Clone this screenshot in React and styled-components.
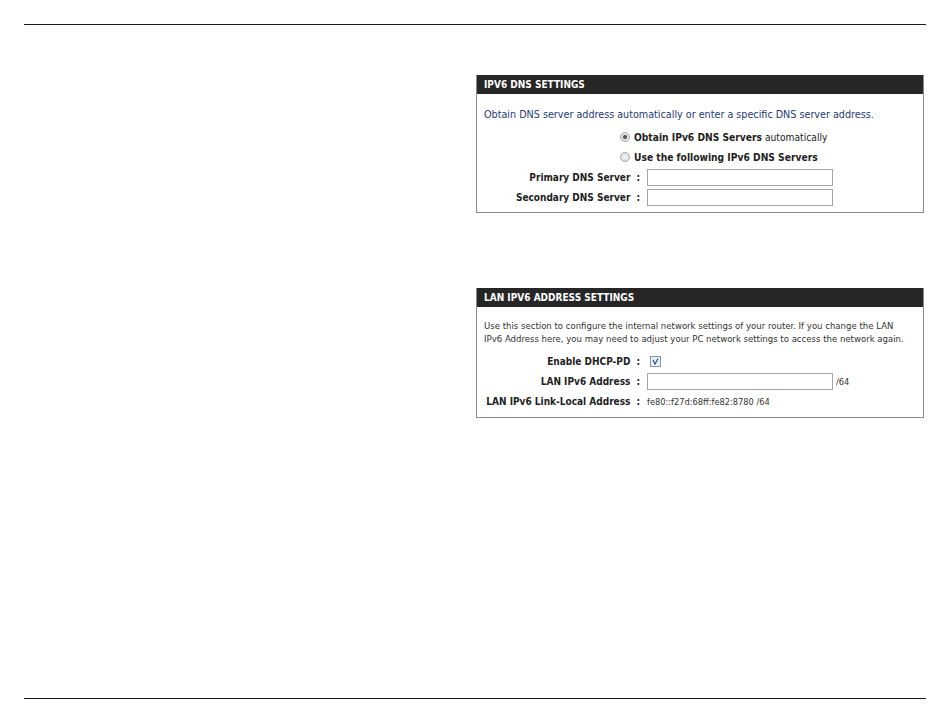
import * as React from 'react';
import styled, { createGlobalStyle } from 'styled-components';

const GlobalStyle = createGlobalStyle`
    html, body {
        margin: 0;
        padding: 0;
        background: #ffffff;
    }
    body {
        font-family: "DejaVu Sans Condensed", "DejaVu Sans", sans-serif;
        color: #222;
    }
`;

const Page = styled.div`
    width: 950px;
    height: 725px;
    display: flex;
    flex-direction: column;
    box-sizing: border-box;
    padding: 24px 24px 0 24px;
`;

const Rule = styled.div`
    height: 1px;
    background: #1a1a1a;
`;

const Body = styled.div`
    flex: 1;
    display: grid;
    grid-template-columns: 452px 448px;
    align-content: start;
`;

const Column = styled.div`
    display: flex;
    flex-direction: column;
    gap: 75px;
    padding-top: 50px;
`;

const Panel = styled.section`
    border: 1px solid #8a8a8a;
    border-top: none;
    background: #fff;
`;

const PanelHeader = styled.h2`
    margin: 0;
    height: 19px;
    line-height: 19px;
    padding-left: 7px;
    background: #262626;
    color: #fff;
    font-size: 10px;
    font-weight: bold;
`;

const PanelBody = styled.div`
    padding: ${p => p.$pad || '13px 7px 5px 7px'};
`;

const Intro = styled.p`
    margin: 0 0 ${p => p.$gap || '6px'} 0;
    font-size: ${p => p.$size || '10.5px'};
    line-height: 13px;
    color: ${p => p.$color || '#1d3a78'};
    white-space: nowrap;
`;

const Form = styled.div`
    display: grid;
    grid-template-columns: 156px 1fr;
    grid-auto-rows: 20px;
    column-gap: 7px;
    align-items: center;
`;

const Label = styled.div`
    text-align: right;
    font-size: 10px;
    font-weight: bold;
    color: #222;
    white-space: nowrap;
`;

const Colon = styled.span`
    margin-left: 6px;
`;

const Value = styled.div`
    display: flex;
    align-items: center;
    gap: 3px;
    font-size: 9.2px;
    color: #333;
    white-space: nowrap;
`;

const RadioRow = styled.label`
    grid-column: 2;
    display: flex;
    align-items: center;
    gap: 4px;
    margin-left: -27px;
    font-size: 10.2px;
    color: #222;
    white-space: nowrap;
`;

const Radio = styled.span`
    width: 8px;
    height: 8px;
    border-radius: 50%;
    border: 1px solid #a8a8a8;
    background: radial-gradient(circle, ${p => (p.$on ? '#5a5a5a 0 1.8px, #e4e4e4 2.4px' : '#f4f4f4 0, #d8d8d8 100%')});
`;

const Bold = styled.b`
    font-weight: bold;
`;

const TextInput = styled.div`
    width: 184px;
    height: 15px;
    border: 1px solid #a5a5a5;
    background: #fff;
`;

const Check = styled.span`
    width: 9px;
    height: 9px;
    border: 1px solid #8797b8;
    background: #e8eef8;
    display: flex;
    align-items: center;
    justify-content: center;
    margin-left: 3px;
`;

const Spacer = styled.div`
    height: 26px;
`;

const Field = ({ label, children }) => (
    <>
        <Label>{label}<Colon>:</Colon></Label>
        <Value>{children}</Value>
    </>
);

export default function App() {
    return (
        <Page>
            <GlobalStyle />
            <Rule />
            <Body>
                <div />
                <Column>
                    <Panel>
                        <PanelHeader>IPV6 DNS SETTINGS</PanelHeader>
                        <PanelBody $pad="14px 7px 5px 7px">
                            <Intro $size="10.7px" $gap="6px">
                                Obtain DNS server address automatically or enter a specific DNS server address.
                            </Intro>
                            <Form>
                                <RadioRow>
                                    <Radio $on />
                                    <span><Bold>Obtain IPv6 DNS Servers</Bold> automatically</span>
                                </RadioRow>
                                <RadioRow>
                                    <Radio />
                                    <Bold>Use the following IPv6 DNS Servers</Bold>
                                </RadioRow>
                                <Field label="Primary DNS Server"><TextInput /></Field>
                                <Field label="Secondary DNS Server"><TextInput /></Field>
                            </Form>
                        </PanelBody>
                    </Panel>
                    <Panel>
                        <PanelHeader>LAN IPV6 ADDRESS SETTINGS</PanelHeader>
                        <PanelBody $pad="12px 7px 6px 7px">
                            <Intro $color="#333" $size="9.5px" $gap="6px">
                                Use this section to configure the internal network settings of your router. If you change the LAN
                                <br />
                                IPv6 Address here, you may need to adjust your PC network settings to access the network again.
                            </Intro>
                            <Form>
                                <Field label="Enable DHCP-PD">
                                    <Check>
                                        <svg width="7" height="7" viewBox="0 0 7 7">
                                            <path d="M1 2 L3 6 L6 0.5" fill="none" stroke="#3a4f86" strokeWidth="1.2" />
                                        </svg>
                                    </Check>
                                </Field>
                                <Field label="LAN IPv6 Address"><TextInput />/64</Field>
                                <Field label="LAN IPv6 Link-Local Address">fe80::f27d:68ff:fe82:8780 /64</Field>
                            </Form>
                        </PanelBody>
                    </Panel>
                </Column>
            </Body>
            <Rule />
            <Spacer />
        </Page>
    );
}
